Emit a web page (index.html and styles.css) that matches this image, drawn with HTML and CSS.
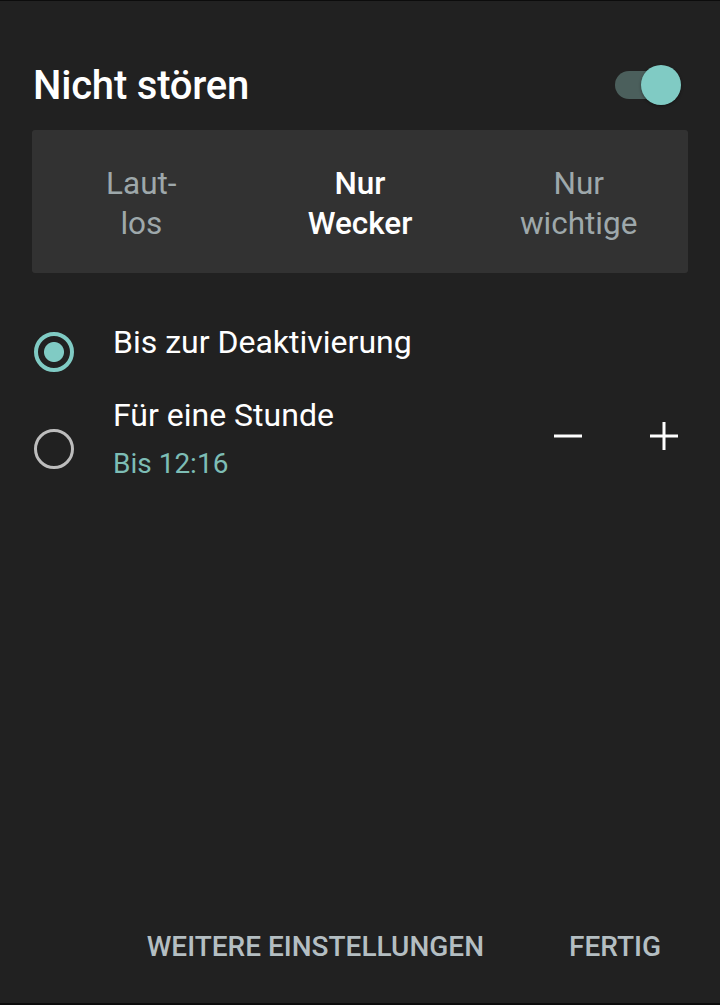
FILE: index.html
```html
<!DOCTYPE html>
<html lang="de">
<head>
  <meta charset="UTF-8" />
  <meta name="viewport" content="width=device-width, initial-scale=1" />
  <title>Nicht stören</title>
  <link rel="stylesheet" href="styles.css">
</head>
<body>

<div class="panel">
  <header class="panel-header">
    <h1 class="title">Nicht stören</h1>
    <div class="switch on">
      <span class="switch-track"></span>
      <span class="switch-thumb"></span>
    </div>
  </header>

  <div class="segments">
    <div class="segment">Laut-<br>los</div>
    <div class="segment active">Nur<br>Wecker</div>
    <div class="segment">Nur<br>wichtige</div>
  </div>

  <div class="options">
    <div class="option">
      <span class="radio checked"></span>
      <div class="option-text">
        <div class="option-label">Bis zur Deaktivierung</div>
      </div>
    </div>

    <div class="option option-timed">
      <span class="radio"></span>
      <div class="option-text">
        <div class="option-label">Für eine Stunde</div>
        <div class="option-sub">Bis 12:16</div>
      </div>
      <div class="stepper">
        <button class="step" aria-label="Weniger">
          <svg width="28" height="28" viewBox="0 0 28 28"><path d="M0 14h28" stroke="#fff" stroke-width="3"/></svg>
        </button>
        <button class="step" aria-label="Mehr">
          <svg width="28" height="28" viewBox="0 0 28 28"><path d="M0 14h28M14 0v28" stroke="#fff" stroke-width="3"/></svg>
        </button>
      </div>
    </div>
  </div>

  <footer class="actions">
    <button class="action">Weitere Einstellungen</button>
    <button class="action">Fertig</button>
  </footer>
</div>

</body>
</html>
```

FILE: styles.css
```css
:root {
  --bg: #212121;
  --surface: #323232;
  --text: #ffffff;
  --muted: #9ea8ab;
  --accent: #80cbc4;
  --accent-dim: #7dbdb5;
  --action: #b4bec2;
}

* {
  box-sizing: border-box;
}

body {
  margin: 0;
  background: var(--bg);
  color: var(--text);
  font-family: Roboto, "Noto Sans", sans-serif;
}

.panel {
  display: flex;
  flex-direction: column;
  min-height: 100vh;
  border-top: 1px solid #0c0c0c;
  border-bottom: 2px solid #0c0c0c;
}

.panel-header {
  display: flex;
  justify-content: space-between;
  align-items: center;
  padding: 0 39px 0 33px;
  margin-top: 58px;
  height: 52px;
}

.title {
  margin: 0;
  font-size: 40px;
  font-weight: 500;
  letter-spacing: -0.2px;
}

.switch {
  position: relative;
  width: 66px;
  height: 40px;
}

.switch-track {
  position: absolute;
  left: 0;
  top: 6px;
  width: 56px;
  height: 28px;
  border-radius: 14px;
  background: #4b5f5c;
}

.switch-thumb {
  position: absolute;
  right: 0;
  top: 0;
  width: 40px;
  height: 40px;
  border-radius: 50%;
  background: var(--accent);
  box-shadow: 0 1px 3px rgba(0, 0, 0, 0.4);
}

.segments {
  display: grid;
  grid-template-columns: repeat(3, 1fr);
  align-items: center;
  margin: 19px 32px 0;
  padding-top: 4px;
  height: 143px;
  background: var(--surface);
  border-radius: 3px;
}

.segment {
  text-align: center;
  font-size: 31.5px;
  line-height: 40px;
  color: var(--muted);
}

.segment.active {
  color: var(--text);
  font-weight: 500;
}

.options {
  margin-top: 49px;
  padding: 0 32px 0 34px;
}

.option {
  display: flex;
  align-items: flex-start;
}

.radio {
  flex: none;
  width: 40px;
  height: 40px;
  margin-top: 10px;
  border-radius: 50%;
  border: 3.5px solid #bdbdbd;
}

.radio.checked {
  border: 4px solid var(--accent);
  background: radial-gradient(circle, var(--accent) 0 9.5px, transparent 10.5px);
}

.option-text {
  flex: 1;
  margin-left: 39px;
}

.option-label {
  font-size: 32px;
  line-height: 40px;
}

.option-timed {
  margin-top: 23px;
}

.option-timed .radio {
  margin-top: 34px;
}

.option-sub {
  margin-top: 10px;
  font-size: 28px;
  line-height: 38px;
  color: var(--accent-dim);
}

.stepper {
  display: flex;
  gap: 48px;
  margin-top: 17px;
}

.step {
  display: flex;
  align-items: center;
  justify-content: center;
  width: 48px;
  height: 48px;
  padding: 0;
  border: none;
  background: none;
}

.actions {
  display: flex;
  justify-content: flex-end;
  gap: 85px;
  margin-top: auto;
  padding: 0 59px 40px 0;
}

.action {
  padding: 0;
  border: none;
  background: none;
  font-family: inherit;
  font-size: 28px;
  line-height: 32px;
  font-weight: 500;
  text-transform: uppercase;
  color: var(--action);
}
```
